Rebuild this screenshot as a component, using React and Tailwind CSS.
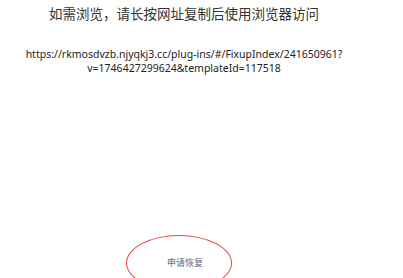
export default function App() {
  return (
    <div
      className="w-[368px] bg-white text-center text-[#333]"
      style={{ fontFamily: '"Noto Sans", "Noto Sans CJK SC", sans-serif' }}
    >
      <h1 className="pt-[4px] text-[13.5px] leading-[20px] font-normal">
        如需浏览，请长按网址复制后使用浏览器访问
      </h1>
      <p className="mt-[23px] text-[10.5px] leading-[14px] text-[#222]">
        https://rkmosdvzb.njyqkj3.cc/plug-ins/#/FixupIndex/241650961?
        <br />
        v=1746427299624&amp;templateId=117518
      </p>
      <div className="mt-[160px] flex justify-center">
        <div className="ml-[-10px] flex h-[56px] w-[106px] items-center justify-center rounded-[50%] border-[1.5px] border-[#e8474a]">
          <span className="pl-[12px] text-[9px] text-[#5b6586]">申请恢复</span>
        </div>
      </div>
    </div>
  )
}
